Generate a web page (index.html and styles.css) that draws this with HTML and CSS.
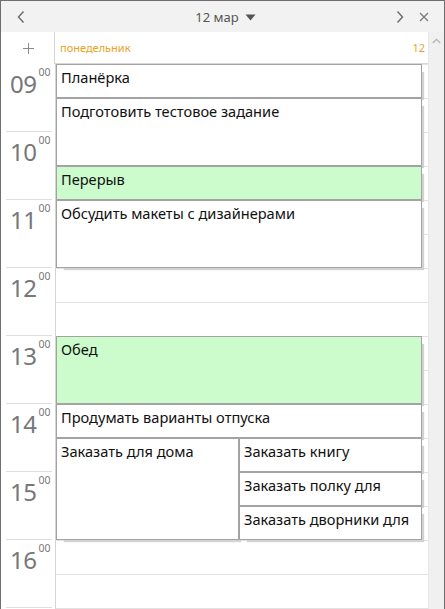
FILE: index.html
```html
<!DOCTYPE html>
<html lang="ru">
<head>
<meta charset="utf-8">
<title>Календарь</title>
<link rel="stylesheet" href="styles.css">
</head>
<body>
<div class="window">
  <header class="titlebar">
    <div class="title-left">
      <button class="icon-btn prev" aria-label="Назад">
        <svg width="10" height="14" viewBox="0 0 10 14"><path d="M7.5 1.5 L2.5 7 L7.5 12.5" fill="none" stroke="#6a6a6a" stroke-width="1.4"/></svg>
      </button>
    </div>
    <div class="title">12 мар
      <svg class="caret" width="11" height="7" viewBox="0 0 11 7"><path d="M0.5 0.5 H10.5 L5.5 6.5 Z" fill="#555"/></svg>
    </div>
    <div class="title-actions">
      <button class="icon-btn next" aria-label="Вперёд">
        <svg width="10" height="14" viewBox="0 0 10 14"><path d="M2.5 1.5 L7.5 7 L2.5 12.5" fill="none" stroke="#6a6a6a" stroke-width="1.4"/></svg>
      </button>
      <button class="icon-btn close" aria-label="Закрыть">
        <svg width="10" height="10" viewBox="0 0 10 10"><path d="M1 1 L9 9 M9 1 L1 9" fill="none" stroke="#7a7a7a" stroke-width="1.3"/></svg>
      </button>
    </div>
  </header>
  <div class="body">
    <div class="main">
      <div class="dayhead">
        <div class="gutter-cell">
          <svg width="11" height="11" viewBox="0 0 11 11"><path d="M5.5 0 V11 M0 5.5 H11" fill="none" stroke="#8a8a8a" stroke-width="1"/></svg>
        </div>
        <div class="dayname"><span>понедельник</span><span>12</span></div>
      </div>
      <div class="timeline">
        <div class="hours">
          <div class="hour"><span class="h">09</span><span class="m">00</span></div>
          <div class="hour"><span class="h">10</span><span class="m">00</span></div>
          <div class="hour"><span class="h">11</span><span class="m">00</span></div>
          <div class="hour"><span class="h">12</span><span class="m">00</span></div>
          <div class="hour"><span class="h">13</span><span class="m">00</span></div>
          <div class="hour"><span class="h">14</span><span class="m">00</span></div>
          <div class="hour"><span class="h">15</span><span class="m">00</span></div>
          <div class="hour"><span class="h">16</span><span class="m">00</span></div>
        </div>
        <div class="events">
          <div class="event full r1-2">Планёрка</div>
          <div class="event full r2-4">Подготовить тестовое задание</div>
          <div class="event full green r4-5">Перерыв</div>
          <div class="event full r5-7">Обсудить макеты с дизайнерами</div>
          <div class="event full green r9-11">Обед</div>
          <div class="event full r11-12">Продумать варианты отпуска</div>
          <div class="event left r12-15">Заказать для дома</div>
          <div class="event right r12-13">Заказать книгу</div>
          <div class="event right r13-14">Заказать полку для</div>
          <div class="event right r14-15">Заказать дворники для</div>
        </div>
      </div>
    </div>
    <div class="scrollbar">
      <svg width="9" height="6" viewBox="0 0 9 6"><path d="M0.8 5 L4.5 1.3 L8.2 5" fill="none" stroke="#b0b0b0" stroke-width="1.2"/></svg>
    </div>
  </div>
</div>
</body>
</html>
```
FILE: styles.css
```css
html, body {
  margin: 0;
  padding: 0;
  background: #fff;
}

.window {
  box-sizing: border-box;
  width: 445px;
  height: 609px;
  border: 1px solid #6e6e6e;
  border-bottom: none;
  overflow: hidden;
  display: flex;
  flex-direction: column;
  font-family: "Noto Sans", "Open Sans", sans-serif;
}

.titlebar {
  height: 31px;
  flex: none;
  background: #f2f2f2;
  display: grid;
  grid-template-columns: 1fr auto 1fr;
  align-items: center;
}

.icon-btn {
  border: 0;
  background: transparent;
  padding: 0;
  margin: 0;
  display: flex;
  align-items: center;
  justify-content: center;
}

.title-left {
  display: flex;
  align-items: center;
}

.prev {
  width: 12px;
  height: 14px;
  margin-left: 14px;
}

.title {
  display: flex;
  align-items: center;
  gap: 6px;
  font-size: 13px;
  color: #555;
  padding-left: 6px;
}

.caret {
  margin-top: 1px;
}

.title-actions {
  display: flex;
  align-items: center;
  justify-content: flex-end;
}

.next {
  width: 12px;
  height: 14px;
  margin-right: 13px;
}

.close {
  width: 10px;
  height: 10px;
  margin-right: 15px;
}

.body {
  flex: 1;
  display: flex;
  min-height: 0;
}

.main {
  flex: 1;
  display: flex;
  flex-direction: column;
  min-width: 0;
}

.dayhead {
  height: 32px;
  flex: none;
  display: flex;
}

.gutter-cell {
  width: 54px;
  border-right: 1px solid #d4d4d4;
  display: flex;
  align-items: center;
  justify-content: center;
  padding-left: 1px;
  padding-top: 0;
  box-sizing: border-box;
}

.dayname {
  flex: 1;
  box-sizing: border-box;
  border-bottom: 1px solid #d8d8d8;
  display: flex;
  justify-content: space-between;
  align-items: center;
  padding: 0 3px 1px 5px;
  font-size: 11px;
  color: #e8a21f;
}

.timeline {
  flex: 1;
  display: flex;
  min-height: 0;
}

.hours {
  width: 54px;
  border-right: 1px solid #d4d4d4;
  flex: none;
}

.hour {
  box-sizing: border-box;
  height: 68px;
  margin: 0 3px 0 5px;
  border-bottom: 1px solid #dedede;
  display: flex;
  align-items: flex-start;
  padding: 5px 0 0 4px;
  color: #777;
}

.hour .h {
  font-size: 24px;
  line-height: 30px;
  letter-spacing: -0.5px;
}

.hour .m {
  font-size: 10.5px;
  line-height: 10px;
  margin-left: 2px;
  margin-top: -2px;
}

.events {
  flex: 1;
  display: grid;
  grid-template-columns: 1fr 1fr;
  grid-template-rows: repeat(16, 34px);
  padding-right: 6px;
  background-image: repeating-linear-gradient(to bottom, #e2e2e2 0, #e2e2e2 1px, transparent 1px, transparent 34px);
}

.event {
  box-sizing: border-box;
  background: #fff;
  border: 1px solid #a3a3a3;
  box-shadow: 5px 5px 1px -3px #d2d2d2;
  padding: 3px 4px;
  font-size: 14.6px;
  line-height: 19px;
  color: #111;
  white-space: nowrap;
  overflow: hidden;
}

.event.green {
  background: #ccfccc;
}

.full { grid-column: 1 / 3; }
.left { grid-column: 1 / 2; }
.right { grid-column: 2 / 3; }

.r1-2 { grid-row: 1 / 2; }
.r2-4 { grid-row: 2 / 4; }
.r4-5 { grid-row: 4 / 5; }
.r5-7 { grid-row: 5 / 7; }
.r9-11 { grid-row: 9 / 11; }
.r11-12 { grid-row: 11 / 12; }
.r12-15 { grid-row: 12 / 15; }
.r12-13 { grid-row: 12 / 13; }
.r13-14 { grid-row: 13 / 14; }
.r14-15 { grid-row: 14 / 15; }

.scrollbar {
  width: 16px;
  flex: none;
  background: #f0f0f0;
  border-left: 1px solid #e6e6e6;
  display: flex;
  justify-content: center;
  align-items: flex-start;
  padding-top: 6px;
  box-sizing: border-box;
}
```
